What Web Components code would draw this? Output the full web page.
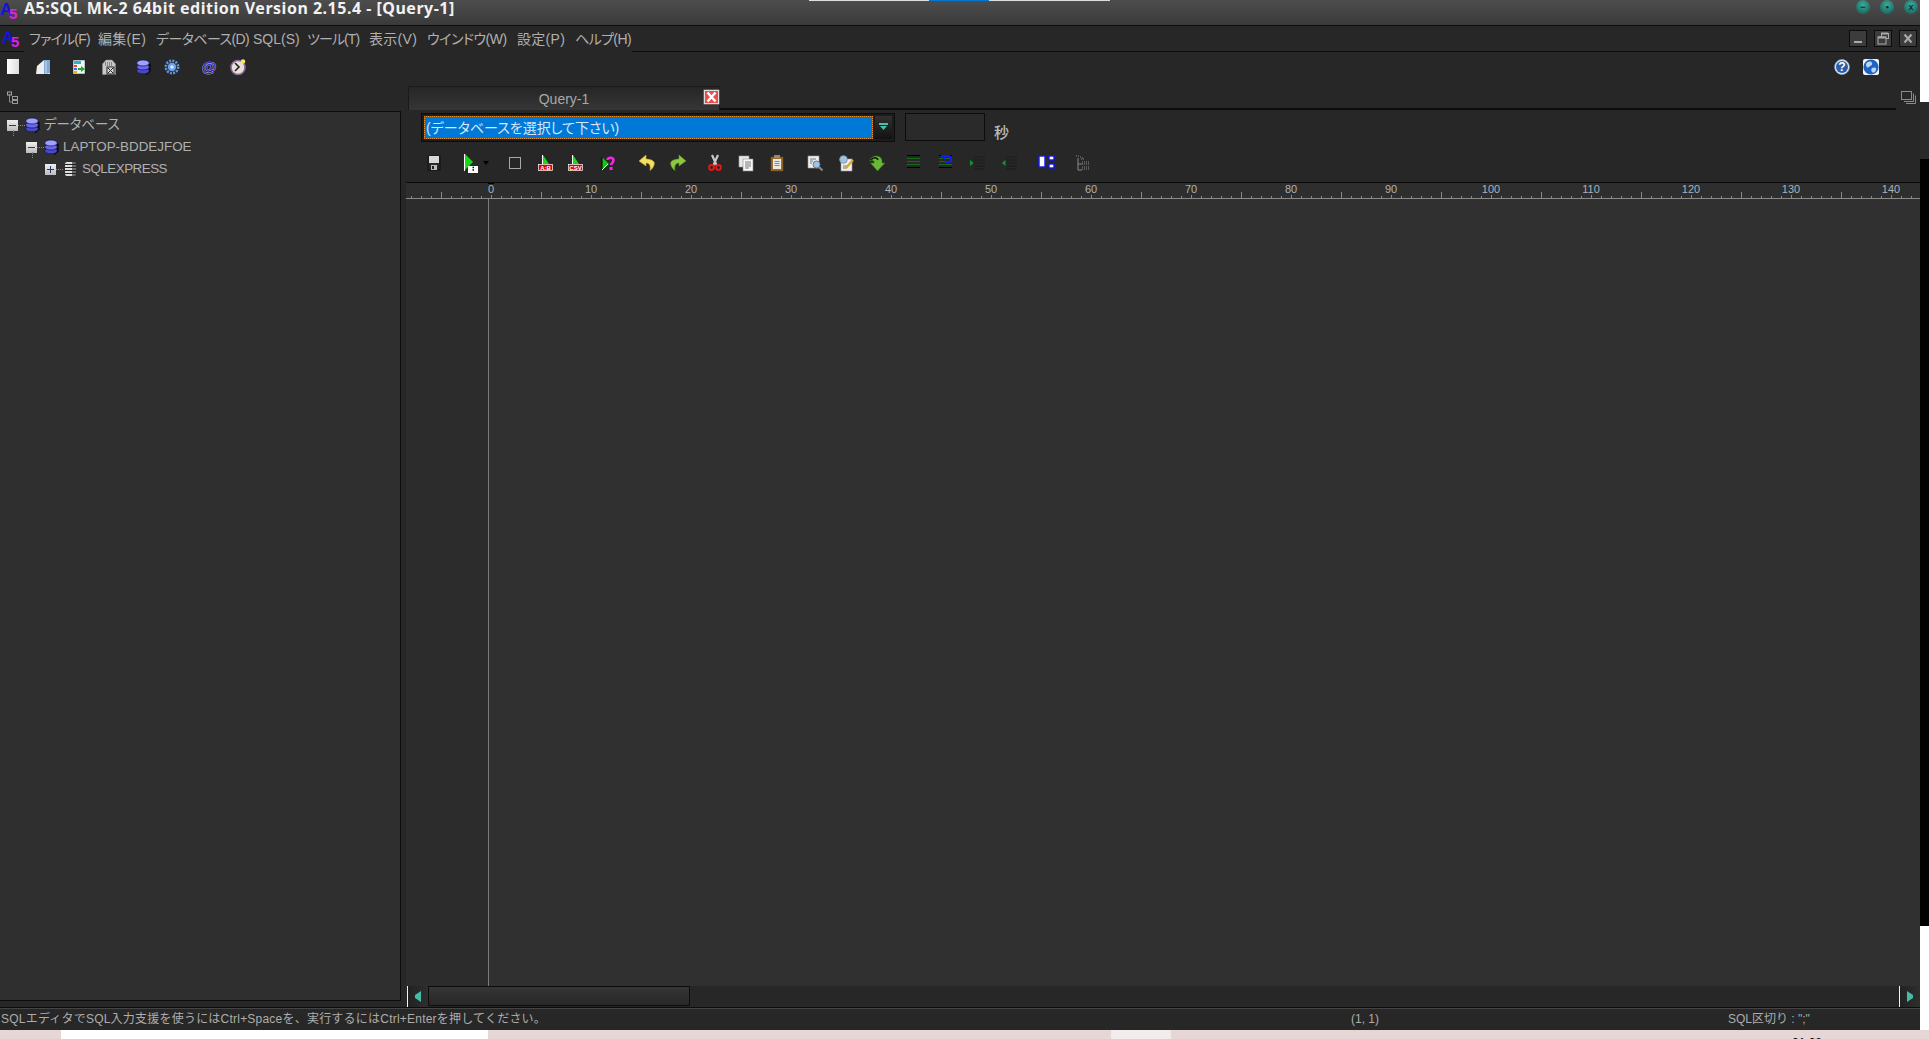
<!DOCTYPE html>
<html lang="ja"><head><meta charset="utf-8"><title>A5:SQL Mk-2</title>
<style>
html,body{margin:0;padding:0;width:1929px;height:1039px;overflow:hidden;background:#e6d6d6}
body{font-family:"Liberation Sans","Noto Sans CJK JP",sans-serif;font-feature-settings:"palt"}
</style></head><body>
<a5-desktop>
  <a5-titlebar>A5:SQL Mk-2 64bit edition Version 2.15.4 - [Query-1]</a5-titlebar>
  <a5-menubar>
    <a5-menu-item w="69" ls="-.8">ファイル(F)</a5-menu-item>
    <a5-menu-item w="58" ls=".3">編集(E)</a5-menu-item>
    <a5-menu-item w="97" ls="-.6">データベース(D)</a5-menu-item>
    <a5-menu-item w="54">SQL(S)</a5-menu-item>
    <a5-menu-item w="62" ls="-.9">ツール(T)</a5-menu-item>
    <a5-menu-item w="58" ls=".3">表示(V)</a5-menu-item>
    <a5-menu-item w="90" ls="-.5">ウインドウ(W)</a5-menu-item>
    <a5-menu-item w="58" ls=".3">設定(P)</a5-menu-item>
    <a5-menu-item w="60" ls="-.6">ヘルプ(H)</a5-menu-item>
  </a5-menubar>
  <a5-toolbar h="26" pad="5">
    <a5-icon name="page"></a5-icon>
    <a5-icon name="door" m="14"></a5-icon>
    <a5-icon name="form" m="20"></a5-icon>
    <a5-icon name="report" m="14"></a5-icon>
    <a5-icon name="db" m="19"></a5-icon>
    <a5-icon name="gear" m="12"></a5-icon>
    <a5-icon name="at" m="21"></a5-icon>
    <a5-icon name="clock" m="13"></a5-icon>
    <a5-spacer></a5-spacer>
    <a5-icon name="help"></a5-icon>
    <a5-icon name="globe" m="13"></a5-icon>
    <a5-icon name="none" m="25"></a5-icon>
  </a5-toolbar>
  <a5-main>
    <a5-tree-panel>
      <a5-tree-node level="0" sign="minus" icon="db">データベース</a5-tree-node>
      <a5-tree-node level="1" sign="minus" icon="db">LAPTOP-BDDEJFOE</a5-tree-node>
      <a5-tree-node level="2" sign="plus" icon="server" style="letter-spacing:-.5px">SQLEXPRESS</a5-tree-node>
    </a5-tree-panel>
    <a5-workspace>
      <a5-tabstrip><a5-tab>Query-1</a5-tab></a5-tabstrip>
      <a5-query-bar>
        <a5-combo>(データベースを選択して下さい)</a5-combo>
        <a5-timebox>秒</a5-timebox>
      </a5-query-bar>
      <a5-toolbar h="30" pad="25" top="3">
        <a5-icon name="floppy"></a5-icon>
        <a5-icon name="play" m="20"></a5-icon>
        <a5-icon name="caret" m="5" w="6"></a5-icon>
        <a5-icon name="square" m="18"></a5-icon>
        <a5-icon name="ab" m="15"></a5-icon>
        <a5-icon name="csv" m="14"></a5-icon>
        <a5-icon name="ask" m="17"></a5-icon>
        <a5-icon name="undo" m="22"></a5-icon>
        <a5-icon name="redo" m="15"></a5-icon>
        <a5-icon name="cut" m="21"></a5-icon>
        <a5-icon name="copy" m="15"></a5-icon>
        <a5-icon name="paste" m="15"></a5-icon>
        <a5-icon name="find" m="22"></a5-icon>
        <a5-icon name="replace" m="15"></a5-icon>
        <a5-icon name="jump" m="15"></a5-icon>
        <a5-icon name="lines" m="21"></a5-icon>
        <a5-icon name="linesundo" m="16"></a5-icon>
        <a5-icon name="indent" m="15"></a5-icon>
        <a5-icon name="outdent" m="16"></a5-icon>
        <a5-icon name="blocks" m="21"></a5-icon>
        <a5-icon name="dots" m="21"></a5-icon>
      </a5-toolbar>
      <a5-ruler></a5-ruler>
      <a5-editor></a5-editor>
      <a5-hscroll></a5-hscroll>
    </a5-workspace>
  </a5-main>
  <a5-statusbar>
    <span slot="a">SQLエディタでSQL入力支援を使うにはCtrl+Spaceを、実行するにはCtrl+Enterを押してください。</span>
    <span slot="b">(1, 1)</span>
    <span slot="c">SQL区切り : ";"</span>
  </a5-statusbar>
</a5-desktop>
<script>
const db=`<path d="M13.800 4.500V12.500L10 15.500" stroke="#000" stroke-width="1.400" fill="none"/><g stroke="#14144a" stroke-width=".7"><ellipse cx="7" cy="11.800" rx="6.300" ry="3" fill="#4a4ac8"/><ellipse cx="7" cy="8" rx="6.300" ry="3" fill="#6a6ae8"/><ellipse cx="7" cy="4" rx="6.300" ry="3" fill="#a0a0ff"/></g>`;
const tri=`<path d="M5 0 L11 9 L5 9Z" fill="#18d818"/><path d="M4.500 0V9" stroke="#fff"/>`;
const lines=(c)=>`<g stroke="${c}" stroke-width="1"><path d="M1 3.500H14M1 6.500H14M1 9.500H14"/></g><path d="M1 .5H14M1 12.500H14" stroke="#000"/>`;
const ICONS={
none:'',
page:`<defs><linearGradient id="g" x2="1"><stop stop-color="#fff"/><stop offset="1" stop-color="#ddd"/></linearGradient></defs><rect x="2" y="0" width="12" height="15" fill="url(#g)"/>`,
door:`<path d="M1 15L2 7L9 1H15V15Z" fill="#eee"/><path d="M9 1H15V14L9 15Z" fill="#7fa8d8"/><path d="M11 2V14" stroke="#cfe0f2"/>`,
form:`<rect x="2" y="1" width="12" height="14" fill="#f4f4f4" stroke="#222" stroke-width=".5"/><rect x="3" y="2" width="7" height="3" fill="#22b8c8"/><rect x="3" y="6" width="3" height="2" fill="#e04040"/><rect x="3" y="9" width="3" height="2" fill="#3070e0"/><rect x="3" y="12" width="3" height="2" fill="#e0b020"/><path d="M7 9H10V7L14 10L10 13V11H7Z" fill="#10b030"/>`,
report:`<path d="M1.500 5L5 1H11L14.500 5V15.500H1.500Z" fill="#c8c8c8" stroke="#888" stroke-width=".6"/><path d="M4 4H12M4 6H12" stroke="#444" stroke-dasharray="1 1"/><rect x="6" y="8" width="7" height="7" fill="#ddd" stroke="#222"/><path d="M7 9L12 14M12 9L7 14" stroke="#222"/>`,
db,
server:`<rect x="2" y="1" width="11" height="14" rx="2" fill="#ddd"/><path d="M2 3.500H13M2 6.500H13M2 9.500H13M2 12.500H13" stroke="#222"/><path d="M9 1H13V15H9Z" fill="#222" opacity=".6"/>`,
gear:`<circle cx="8" cy="8" r="6.200" fill="none" stroke="#5f95e6" stroke-width="2.600" stroke-dasharray="2 1.200"/><circle cx="8" cy="8" r="4.200" fill="#6fa0ea"/><circle cx="8" cy="8" r="1.700" fill="#dfe9ff"/>`,
at:`<text x="8" y="13" text-anchor="middle" font-family="Liberation Sans" font-weight="700" font-size="15" fill="#2a2ac0" stroke="#e8ecff" stroke-width=".5" paint-order="stroke">@</text>`,
clock:`<circle cx="8" cy="8.500" r="7" fill="#e8e0d8" stroke="#8a6a9a" stroke-width="1.600"/><path d="M5 4L9 8L5 12" fill="none" stroke="#222" stroke-width="1.600"/><circle cx="13" cy="2.500" r="2.200" fill="#f8e860"/>`,
help:`<circle cx="8" cy="8" r="7.400" fill="#dbe6f5" stroke="#8fb0d8" stroke-dasharray="1.500 .6"/><circle cx="8" cy="8" r="6" fill="#2b5ca8"/><text x="8" y="12.200" text-anchor="middle" font-family="Liberation Sans" font-weight="700" font-size="12" fill="#fff">?</text>`,
globe:`<rect width="16" height="16" rx="2" fill="#f0f4fa"/><circle cx="8" cy="8" r="7.600" fill="#1d62c4"/><path d="M3 5C5 2 8 2 9 4S7 7 6 8 3 9 3 5ZM9 9C11 8 14 8 13 11S10 14 9 13 8 10 9 9Z" fill="#bcd6f2"/>`,
floppy:`<rect x="2" y="1" width="12" height="14" fill="#2a2a2a" stroke="#111"/><rect x="3" y="1" width="10" height="7" fill="#d8d8d8"/><rect x="5" y="10" width="6" height="5" fill="#bbb"/><rect x="6" y="11" width="2" height="3" fill="#222"/>`,
play:`<path d="M3 -1L11 7L3 15Z" fill="#18d818"/><path d="M2.500 -1V16" stroke="#fff"/><rect x="6" y="11" width="10" height="7" fill="#fff"/><path d="M10.500 12.500h1.500M10.500 15h1.500" stroke="#000" stroke-width="1.400"/>`,
caret:`<path d="M0 6H6L3 10Z" fill="#000"/>`,
square:`<rect x="2.500" y="2.500" width="11" height="11" fill="none" stroke="#a8a8a8"/>`,
ab:`${tri}<rect x="0.500" y="9.500" width="14" height="6" fill="#e00000" stroke="#fff" stroke-width=".7"/><text x="7.500" y="14.800" text-anchor="middle" font-family="Liberation Sans" font-weight="700" font-size="6" fill="#fff">A:B</text>`,
csv:`${tri}<rect x="0.500" y="9.500" width="14" height="6" fill="#e00000" stroke="#fff" stroke-width=".7"/><text x="7.500" y="14.800" text-anchor="middle" font-family="Liberation Sans" font-weight="700" font-size="6" fill="#fff">CSV</text>`,
ask:`<path d="M1 2L8 9L1 15Z" fill="#18c018"/><path d="M1 2V15" stroke="#000"/><path d="M1 15L7 9" stroke="#fff"/><path d="M6.500 5C6.500 2 12.500 2 12.500 5C12.500 8 10 8 10 10" fill="none" stroke="#ff20f0" stroke-width="2.600"/><rect x="8.600" y="12" width="3" height="3" fill="#ff20f0"/>`,
undo:`<path d="M7 0L0 6L7 11V8C10 8 12 10 11 15.500C14.500 13 16 9 15 7C14 5 10 4 7 4Z" fill="#f4e060" stroke="#c8a830" stroke-width=".6"/>`,
redo:`<path d="M9 0L16 6L9 11V8C6 8 4 10 5 15.500C1.500 13 0 9 1 7C2 5 6 4 9 4Z" fill="#8cc840" stroke="#5a9a28" stroke-width=".6"/>`,
cut:`<path d="M5 0L9.500 10M11 0L6.500 10" stroke="#c8c8c8" stroke-width="2.200"/><circle cx="4.500" cy="12.500" r="2.400" fill="none" stroke="#e01818" stroke-width="2"/><circle cx="11.500" cy="12.500" r="2.400" fill="none" stroke="#e01818" stroke-width="2"/>`,
copy:`<rect x="1" y="1" width="10" height="11" fill="#e8e8e8" stroke="#999" stroke-width=".6"/><rect x="5" y="4" width="10" height="12" fill="#f8f8f8" stroke="#888" stroke-width=".6"/><path d="M7 7H13M7 9H13M7 11H13M7 13H11" stroke="#777"/>`,
paste:`<rect x="2" y="2" width="12" height="14" fill="#a06c28" stroke="#6c4818" stroke-width=".6"/><rect x="4" y="4" width="8" height="10" fill="#e8e8e8"/><rect x="5" y="0" width="6" height="3" fill="#8a8a8a"/><path d="M5.500 6.500H10.500M5.500 8.500H10.500M5.500 10.500H10.500" stroke="#888"/>`,
find:`<rect x="1" y="1" width="11" height="12" fill="#eee" stroke="#999" stroke-width=".6"/><path d="M3 4H9M3 6H6M3 8H5" stroke="#777"/><circle cx="9.500" cy="9.500" r="3.500" fill="#9cc4e8" stroke="#6a7a88"/><path d="M12 12L15.500 15.500" stroke="#888" stroke-width="2"/>`,
replace:`<rect x="3" y="4" width="11" height="12" fill="#eee" stroke="#999" stroke-width=".6"/><path d="M5 11H9M5 13H9" stroke="#777"/><circle cx="5.500" cy="4.500" r="3.800" fill="#9cc4e8" stroke="#8a9aa8"/><path d="M8 13L15 5" stroke="#d8a828" stroke-width="2.200"/>`,
jump:`<path d="M1 6C2 0 11 -1 13 5V8H16L8.500 16L1.500 8H5C6 6 4 5 1 6Z" fill="#6ab838" stroke="#2e7818" stroke-width=".6"/><path d="M2 5C4 2 8 2 9 5" fill="none" stroke="#111" stroke-width="1.500"/>`,
lines:lines('#107010'),
linesundo:`${lines('#107010')}<path d="M3 1H10A3 3 0 0 1 10 7H7" fill="none" stroke="#1818f0" stroke-width="2"/><path d="M6 0V4" stroke="#1818f0" stroke-width="2"/>`,
indent:`<path d="M5 2H16M5 5H16M5 8H16M5 11H16M5 14H16" stroke="#1c1c1c"/><path d="M1 5L4.500 8L1 11Z" fill="#0c9a30"/>`,
outdent:`<path d="M5 2H16M5 5H16M5 8H16M5 11H16M5 14H16" stroke="#1c1c1c"/><path d="M4.500 5L1 8L4.500 11Z" fill="#0c9a30"/>`,
blocks:`<rect x="1" y="1" width="6" height="11" fill="#fff" stroke="#1414f0" stroke-width="1.400"/><rect x="11" y="1" width="5" height="4" fill="#fff" stroke="#1414f0" stroke-width="1.400"/><rect x="11" y="9" width="5" height="4" fill="#fff" stroke="#1414f0" stroke-width="1.400"/><path d="M7 6H11M9 6V11" stroke="#333"/>`,
dots:`<g stroke="#8a8a8a" fill="none"><path d="M3 3V15H7M3 9H7"/><path d="M1 1h1M3 1h1M5 2h1M7 3h1M8 4h1M6 4h1" stroke-dasharray="1 1"/><path d="M7 7h7M7 9h8M7 12h8M7 14h7" stroke-dasharray="1 1"/></g>`
};
function el(name,css,html,init){
  customElements.define(name,class extends HTMLElement{
    constructor(){super();this.attachShadow({mode:'open'}).innerHTML=`<style>${css}</style>${html}`;}
    connectedCallback(){if(init)init.call(this,this.shadowRoot);}
  });
}
el('a5-icon',':host{display:block;flex:none;width:16px;height:16px}svg{display:block;overflow:visible}','',function(r){
  const n=this.getAttribute('name'),w=this.getAttribute('w')||16,m=this.getAttribute('m')||0;
  this.style.width=w+'px';this.style.marginLeft=m+'px';
  r.innerHTML+=`<svg width="${w}" height="16" viewBox="0 0 ${w} 16">${ICONS[n]||''}</svg>`;
});
el('a5-spacer',':host{display:block;flex:1}','<span></span>');
el('a5-logo',':host{display:block;flex:none;width:19px;height:20px;font:700 17px/17px "Liberation Sans",sans-serif;position:relative}b{position:absolute;left:0;top:1px;color:#1414d8}i{position:absolute;left:9px;top:5px;color:#e020e0;font-style:normal;font-size:15px}',
 '<b>A</b><i>5</i>');
el('a5-desktop',`:host{display:grid;grid-template-columns:1920px 9px;grid-template-rows:1030px 9px;width:1929px;height:1039px;overflow:hidden}
 .win{display:flex;flex-direction:column;background:#272727;height:1030px;width:1920px;overflow:hidden}
 .edge{display:flex;flex-direction:column}.e1{height:102px;background:#fff}.e2{height:57px;background:#292929}.e3{height:767px;background:#000}.e4{height:104px;background:#fff}
 .task{grid-column:1/3;display:flex;background:#e6d6d6;height:9px;overflow:hidden}
 .w1{margin-left:61px;width:427px;background:#fff;height:9px}.w2{margin-left:623px;width:60px;background:#f2ecec}
 .clock{margin-left:621px;width:40px;font:12px/14px "Liberation Sans",sans-serif;color:#000;padding-top:6px;height:14px}`,
 `<div class="win"><slot></slot></div><div class="edge"><div class="e1"></div><div class="e2"></div><div class="e3"></div><div class="e4"></div></div>
  <div class="task"><div class="w1"></div><div class="w2"></div><div class="clock">21:28</div></div>`);
el('a5-titlebar',`:host{display:flex;flex:none;align-items:flex-start;height:25px;border-bottom:1px solid #0c0c0c;background:linear-gradient(#4d4d4d,#3a3a3a);position:relative;color:#f2f2f2}
 .t{font:700 16px/16px "Noto Sans",sans-serif;letter-spacing:.5px;margin-left:5px;white-space:nowrap}
 .c{margin-left:auto;display:flex;gap:10px;padding:0 2px 0 0}
 .b{width:14px;height:14px;border-radius:50%;background:radial-gradient(circle at 50% 35%,#3fa89a,#10584f);color:#0a2c28;font:700 9px/14px "Liberation Sans";text-align:center}
 .bar{position:absolute;left:809px;width:301px;top:0;height:1px;background:#ddd}.bar i{display:block;margin-left:120px;width:60px;height:1px;background:#0078d7}`,
 `<a5-logo></a5-logo><div class="t"><slot></slot></div><div class="c"><div class="b">−</div><div class="b">▪</div><div class="b">x</div></div><div class="bar"><i></i></div>`);
el('a5-menubar',`:host{display:flex;flex:none;height:26px;align-items:stretch;background:#272727}
 .logo{width:24px;padding-left:2px;box-sizing:border-box;padding-top:2px;border-bottom:1px solid #0c0c0c;margin-right:5px}
 .items{display:flex;align-items:center;padding-top:0}
 .fill{flex:1;border-bottom:1px solid #0c0c0c;display:flex;justify-content:flex-end;gap:7px;padding:4px 3px 0 0;box-sizing:border-box;margin-left:-3px}
 .mb{width:18px;height:17px;background:#3c3c3c;border:1px solid #0c0c0c;box-sizing:border-box;position:relative}
 svg{display:block}`,
 `<div class="logo"><a5-logo></a5-logo></div><div class="items"><slot></slot></div><div class="fill">
 <div class="mb"><svg width="16" height="15"><path d="M4 11H12" stroke="#aaa" stroke-width="2"/></svg></div>
 <div class="mb"><svg width="16" height="15"><rect x="6.500" y="2.500" width="7" height="5" fill="none" stroke="#aaa"/><rect x="3" y="6" width="8" height="7" fill="#3c3c3c" stroke="#aaa"/><path d="M6 2.500h7M3 6.500h8" stroke="#aaa" stroke-width="2"/></svg></div>
 <div class="mb"><svg width="16" height="15"><path d="M4.500 3.500L11.500 11.500M11.500 3.500L4.500 11.500" stroke="#aaa" stroke-width="2"/></svg></div></div>`);
el('a5-menu-item',`:host{display:block;flex:none;font:14px/18px "Liberation Sans","Noto Sans CJK JP",sans-serif;color:#b0b0b0;white-space:nowrap;font-feature-settings:"palt"}`,'<slot></slot>',function(){this.style.width=this.getAttribute('w')+'px';if(this.hasAttribute('ls'))this.style.letterSpacing=this.getAttribute('ls')+'px';});
el('a5-toolbar',`:host{display:flex;flex:none;align-items:flex-start;box-sizing:border-box}`,'<slot></slot>',function(){
  this.style.height=this.getAttribute('h')+'px';
  this.style.paddingLeft=this.getAttribute('pad')+'px';
  this.style.paddingTop=(this.getAttribute('top')||7)+'px';
});
el('a5-main',':host{display:flex;flex:1;min-height:0}','<slot></slot>');
el('a5-tree-panel',`:host{display:flex;flex-direction:column;flex:none;width:401px}
 .head{height:33px;flex:none;box-sizing:border-box;padding:13px 0 0 6px}
 .body{height:890px;box-sizing:border-box;background:#2f2f2f;border:solid #0c0c0c;border-width:1px 1px 1px 0;padding-top:2px}
 svg{display:block}`,
 `<div class="head"><svg width="14" height="14"><path d="M3.500 3V11H6" fill="none" stroke="#888"/><rect x="1.500" y="1" width="4" height="3" fill="none" stroke="#9aa"/><rect x="6.500" y="5.500" width="5" height="3" fill="none" stroke="#999"/><rect x="6.500" y="9.500" width="5" height="3" fill="none" stroke="#999"/></svg></div><div class="body"><slot></slot></div>`);
el('a5-tree-node',`:host{display:flex;align-items:center;height:22px;font:13.400px/22px "Liberation Sans","Noto Sans CJK JP",sans-serif;color:#b0b0b0;position:relative;white-space:nowrap;font-feature-settings:"palt"}
 .box{width:11px;height:11px;background:linear-gradient(#eee,#bbb);flex:none;position:relative}
 .box i{position:absolute;left:2px;top:5px;width:7px;height:1px;background:#223a70}
 .box b{position:absolute;left:5px;top:2px;width:1px;height:7px;background:#223a70}
 .con{width:7px;height:0;border-top:1px dotted #888;flex:none}
 .txt{margin-left:5px}
 .v{position:absolute;top:-6px;height:6px;border-left:1px dotted #888}`,'',function(r){
  const l=+this.getAttribute('level'),s=this.getAttribute('sign'),ic=this.getAttribute('icon');
  this.style.paddingLeft=(7+19*l)+'px';
  r.innerHTML+=`${l?`<div class="v" style="left:${7+19*l-13}px"></div>`:''}<div class="box"><i></i>${s==='plus'?'<b></b>':''}</div><div class="con"></div><a5-icon name="${ic}"></a5-icon><div class="txt"><slot></slot></div>`;
  r.querySelector('a5-icon').style.width='14px';
 });
el('a5-workspace',':host{display:flex;flex-direction:column;flex:1;min-width:0;background:#272727}','<slot></slot>');
el('a5-tabstrip',`:host{display:flex;flex:none;height:32px;padding-left:7px;align-items:stretch;position:relative}
 .fill{width:1176px;border-bottom:2px solid #0c0c0c;box-sizing:border-box;height:32px}
 .cas{margin:13px 0 0 5px}svg{display:block}`,
 `<slot></slot><div class="fill"></div><div class="cas"><svg width="15" height="13"><rect x=".5" y=".5" width="10" height="8" fill="none" stroke="#8a8a8a"/><path d="M12.500 2.500V10.500H3M14.500 4.500V12.500H5" fill="none" stroke="#8a8a8a"/></svg></div>`);
el('a5-tab',`:host{display:flex;align-items:center;justify-content:center;box-sizing:border-box;width:312px;height:24px;margin-top:8px;background:linear-gradient(#262626,#363636);border:1px solid #1a1a1a;border-bottom:0;color:#a8a8a8;font:14px/22px "Liberation Sans",sans-serif;position:relative}
 .x{position:absolute;right:0;top:3px;width:15px;height:14px;background:#e85050;border:1px solid #ddd;box-sizing:border-box;box-shadow:0 0 0 .5px #888}svg{display:block}`,
 `<slot></slot><div class="x"><svg width="13" height="12"><path d="M2.500 1.500L10.500 10.500M10.500 1.500L2.500 10.500" stroke="#fff" stroke-width="2.400"/></svg></div>`);
el('a5-query-bar',':host{display:flex;flex:none;height:42px;padding:3px 0 0 20px;box-sizing:border-box;align-items:flex-start}','<slot></slot>');
el('a5-combo',`:host{display:flex;flex:none;box-sizing:border-box;width:474px;height:29px;border:1px solid #0c0c0c;background:#1c1c1c;padding:2px;gap:2px}
 .f{width:449px;height:23px;background:#0078d7;outline:1px dotted #e8902a;outline-offset:-1px;color:#d6e8f6;font:14px/25px "Liberation Sans","Noto Sans CJK JP",sans-serif;padding-left:2px;box-sizing:border-box;white-space:nowrap;font-feature-settings:"palt"}
 .b{flex:1;background:linear-gradient(#303030,#121212);display:flex;flex-direction:column;align-items:center;padding-top:7px;box-sizing:border-box}
 svg{display:block}`,
 `<div class="f"><slot></slot></div><div class="b"><svg width="9" height="8"><path d="M0 0H9V2H0ZM1 3H8L4.500 7Z" fill="#45c0a8"/></svg></div>`);
el('a5-timebox',`:host{display:flex;flex:none;align-items:flex-start;margin-left:10px;font:500 15px/18px "Noto Sans CJK JP",sans-serif;color:#bcbcbc}
 .b{width:80px;height:28px;box-sizing:border-box;border:1px solid #0c0c0c;background:#2a2a2a;margin-right:9px}
 .s{padding-top:10px}`,
 `<div class="b"></div><div class="s"><slot></slot></div>`);
el('a5-ruler',`:host{display:flex;flex:none;box-sizing:border-box;height:17px;margin-left:5px;border-top:1px solid #0c0c0c;border-bottom:1px solid #8a8a8a;padding-left:35px;overflow:hidden;position:relative;background-color:#2e2e2e}
 .t{position:absolute;left:0;right:0;bottom:0;height:6px;background-repeat:repeat-x;
   background-image:linear-gradient(to right,#8a8a8a 1px,transparent 1px),linear-gradient(to right,#8a8a8a 1px,transparent 1px);
   background-size:50px 6px,10px 2px;background-position:35px 100%,5px 100%}
 .r{display:flex;width:1500px;position:relative;z-index:1}
 span{flex:none;width:100px;text-align:center;font:11px/12px "Liberation Sans",sans-serif;color:#aab2ba;height:10px;overflow:visible}
 span b{font-weight:400;background:#2e2e2e;padding:0 1px}
 .mk{position:absolute;left:47px;top:0;width:6px;height:1px;background:#000}`,
 `<div class="t"></div><div class="r"></div>`,function(r){
   let h='<i class="mk"></i>';
   for(let i=0;i<=140;i+=10)h+=`<span><b>${i}</b></span>`;
   r.querySelector('.r').innerHTML=h;
 });
el('a5-editor',`:host{display:flex;flex:1;min-height:0;margin-left:5px;background:#303030}
 .g{width:82px;flex:none;background:#2c2c2c;border-right:1px solid #7a7a7a}`,'<div class="g"></div>');
el('a5-hscroll',`:host{display:flex;flex:none;height:21px;margin-left:6px;background:#272727;box-sizing:border-box;align-items:stretch}
 .l{width:1px;background:#f2f2f2;flex:none}
 .b{width:20px;flex:none;background:linear-gradient(to right,#222,#2e2e2e);display:flex;align-items:center;justify-content:center}
 .th{width:262px;flex:none;box-sizing:border-box;height:20px;border:1px solid #0c0c0c;background:linear-gradient(#363636,#272727)}
 .f{flex:1}svg{display:block}`,
 `<div class="l"></div><div class="b"><svg width="6" height="11"><path d="M6 0V11L0 7V4Z" fill="#44bca6"/></svg></div><div class="th"></div><div class="f"></div><div class="l"></div><div class="b"><svg width="6" height="11"><path d="M0 0V11L6 7V4Z" fill="#44bca6"/></svg></div>`);
el('a5-statusbar',`:host{display:grid;grid-template-columns:1351px 377px 1fr;flex:none;height:23px;box-sizing:border-box;background:#272727;border-top:1px solid #0c0c0c;box-shadow:inset 0 1px 0 #444;font:12px/22px "Liberation Sans","Noto Sans CJK JP",sans-serif;color:#adadad;white-space:nowrap}
 .a{padding-left:1px;letter-spacing:.22px}`,
 `<div class="a"><slot name="a"></slot></div><div><slot name="b"></slot></div><div><slot name="c"></slot></div>`);
</script>
</body></html>
